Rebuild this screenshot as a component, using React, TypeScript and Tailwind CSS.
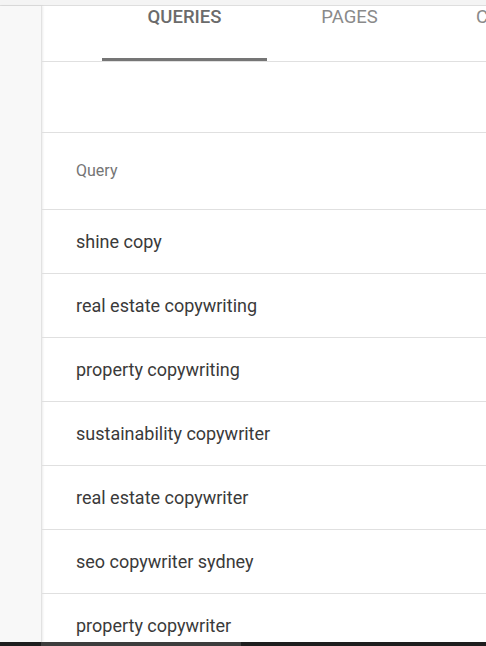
const rows = [
  "shine copy",
  "real estate copywriting",
  "property copywriting",
  "sustainability copywriter",
  "real estate copywriter",
  "seo copywriter sydney",
  "property copywriter",
];

function Tab({ label, active }: { label: string; active?: boolean }) {
  return (
    <div className="relative min-w-[165px] px-[44px] shrink-0 flex justify-center pt-[1px]">
      <span
        className={
          active
            ? "text-[18.5px] leading-[20px] font-medium text-[#6b6b6b] whitespace-nowrap"
            : "text-[18.5px] leading-[20px] text-[#8a8a8a] whitespace-nowrap"
        }
      >
        {label}
      </span>
      {active && <div className="absolute bottom-0 left-0 right-0 h-[3px] bg-[#757575]" />}
    </div>
  );
}

export default function App() {
  return (
    <div
      className="w-[486px] h-[646px] overflow-hidden flex flex-col bg-white"
      style={{ fontFamily: "Roboto, 'Liberation Sans', sans-serif" }}
    >
      <div className="h-[6px] shrink-0 bg-[#f4f4f4] border-b border-[#dedede]" />
      <div className="flex flex-1 min-h-0">
        <div className="w-[42px] shrink-0 bg-[#f8f8f8] border-r border-[#e2e2e2] shadow-[1px_0_2px_rgba(0,0,0,0.08)]" />
        <div className="flex-1 min-w-0 flex flex-col">
          <div className="h-[56px] shrink-0 flex pl-[60px] border-b border-[#e0e0e0] overflow-hidden">
            <Tab label="QUERIES" active />
            <Tab label="PAGES" />
            <Tab label="COUNTRIES" />
          </div>
          <div className="h-[71px] shrink-0 border-b border-[#e0e0e0]" />
          <div className="h-[77px] shrink-0 flex items-center pl-[34px] border-b border-[#e0e0e0] text-[16px] text-[#757575]">
            Query
          </div>
          {rows.map((r) => (
            <div
              key={r}
              className="h-[64px] shrink-0 flex items-center pl-[34px] border-b border-[#e0e0e0] text-[18px] text-[#3a3a3a]"
            >
              {r}
            </div>
          ))}
        </div>
      </div>
      <div className="h-[4px] shrink-0 bg-[#1e1e1e] flex">
        <div className="ml-[41px] w-[200px] bg-[#3d3d3d]" />
      </div>
    </div>
  );
}
